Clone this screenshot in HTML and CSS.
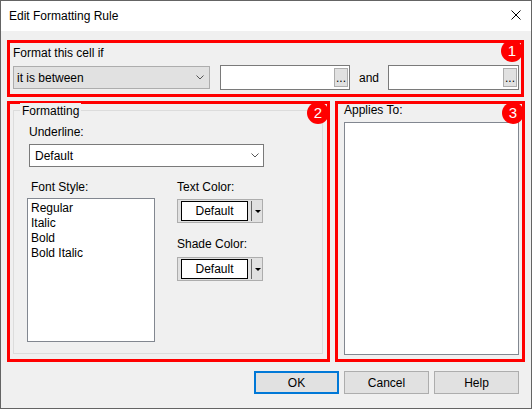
FILE: index.html
```html
<!DOCTYPE html>
<html lang="en">
<head>
    <meta charset="UTF-8">
    <meta name="viewport" content="width=device-width, initial-scale=1.0">
    <title>Edit Formatting Rule</title>
    <link rel="stylesheet" href="styles.css">
</head>
<body>

<div class="dialog">
    <div class="titlebar">
        <span class="title">Edit Formatting Rule</span>
        <svg class="close" width="10" height="10" viewBox="0 0 10 10">
            <path d="M0.5 0.5 L9.5 9.5 M9.5 0.5 L0.5 9.5" stroke="#000" stroke-width="1" fill="none"/>
        </svg>
    </div>

    <div class="content">
        <!-- condition -->
        <div class="frame frame-condition">
            <span class="badge">1</span>
            <div class="label">Format this cell if</div>
            <div class="condition-row">
                <div class="combo combo-flat">
                    <span>it is between</span>
                    <svg class="chevron" width="8" height="5" viewBox="0 0 8 5">
                        <polyline points="0.5,0.5 4,4 7.5,0.5" stroke="#555" stroke-width="1" fill="none"/>
                    </svg>
                </div>
                <div class="textbox"><button class="ellipsis">...</button></div>
                <span class="and">and</span>
                <div class="textbox textbox-wide"><button class="ellipsis">...</button></div>
            </div>
        </div>

        <div class="frames-row">
            <!-- formatting -->
            <div class="frame frame-format">
                <span class="badge">2</span>
                <div class="group">
                    <span class="legend">Formatting</span>
                    <div class="label">Underline:</div>
                    <div class="combo combo-white">
                        <span>Default</span>
                        <svg class="chevron" width="8" height="5" viewBox="0 0 8 5">
                            <polyline points="0.5,0.5 4,4 7.5,0.5" stroke="#555" stroke-width="1" fill="none"/>
                        </svg>
                    </div>

                    <div class="style-cols">
                        <div class="col-font">
                            <div class="label">Font Style:</div>
                            <ul class="listbox font-list">
                                <li>Regular</li>
                                <li>Italic</li>
                                <li>Bold</li>
                                <li>Bold Italic</li>
                            </ul>
                        </div>
                        <div class="col-color">
                            <div class="label">Text Color:</div>
                            <div class="color-btn">
                                <span class="swatch">Default</span>
                                <span class="split"></span>
                                <span class="arrow"></span>
                            </div>
                            <div class="label shade-label">Shade Color:</div>
                            <div class="color-btn">
                                <span class="swatch">Default</span>
                                <span class="split"></span>
                                <span class="arrow"></span>
                            </div>
                        </div>
                    </div>
                </div>
            </div>

            <!-- range -->
            <div class="frame frame-applies">
                <span class="badge">3</span>
                <div class="label applies-label">Applies To:</div>
                <div class="listbox applies-list"></div>
            </div>
        </div>

        <div class="footer">
            <button class="btn btn-default">OK</button>
            <button class="btn">Cancel</button>
            <button class="btn">Help</button>
        </div>
    </div>
</div>

</body>
</html>
```

FILE: styles.css
```css
* {
    box-sizing: border-box;
}
body {
    margin: 0;
    font-family: "Liberation Sans", Arial, sans-serif;
    font-size: 12px;
    color: #000;
}
.dialog {
    width: 532px;
    height: 409px;
    border: 1px solid #646464;
    display: flex;
    flex-direction: column;
}
.titlebar {
    height: 30px;
    background: #fff;
    display: flex;
    align-items: center;
    justify-content: space-between;
    padding: 0 10px 0 8px;
    line-height: 16px;
}
.close {
    margin-top: -2px;
}
.content {
    flex: 1;
    background: #f0f0f0;
    padding: 9px 6px 0 6px;
}
.label {
    line-height: 16px;
}

/* red outlines around the three areas */
.frame {
    border: 3px solid #ff0000;
    position: relative;
}
.badge {
    position: absolute;
    top: -2px;
    right: -2px;
    width: 22px;
    height: 22px;
    border-radius: 50%;
    background: #ff0000;
    color: #fff;
    font-size: 15px;
    line-height: 22px;
    text-align: center;
    z-index: 2;
}
.frame-condition {
    width: 517px;
    height: 57px;
    padding: 2px 0 0 3px;
}
.frame-condition .badge {
    top: -3px;
}
.condition-row {
    display: flex;
    align-items: center;
    height: 25px;
    margin-top: 4px;
}
.combo {
    height: 23px;
    display: flex;
    align-items: center;
    justify-content: space-between;
}
.combo-flat {
    width: 197px;
    background: #e1e1e1;
    border: 1px solid #adadad;
    padding: 0 5px 0 3px;
}
.textbox {
    width: 130px;
    height: 25px;
    margin-left: 10px;
    background: #fff;
    border: 1px solid #7a7a7a;
    display: flex;
    align-items: center;
    justify-content: flex-end;
    padding-right: 1px;
}
.textbox-wide {
    width: 131px;
    margin-left: 0;
}
.ellipsis {
    width: 14px;
    height: 19px;
    padding: 0;
    background: #e1e1e1;
    border: 1px solid #adadad;
    font: inherit;
    line-height: 19px;
    color: #000;
}
.and {
    margin: 0 9px 0 9px;
}

.frames-row {
    display: flex;
    gap: 5px;
    margin-top: 4px;
}
.frame-format {
    width: 323px;
    height: 261px;
    padding: 6px 0 0 3px;
}
.group {
    position: relative;
    width: 310px;
    height: 244px;
    border: 1px solid #dcdcdc;
    padding: 13px 0 0 15px;
}
.legend {
    position: absolute;
    top: -8px;
    left: 6px;
    padding: 0 2px;
    background: #f0f0f0;
    line-height: 16px;
}
.combo-white {
    width: 235px;
    margin-top: 4px;
    background: #fff;
    border: 1px solid #7a7a7a;
    padding: 0 4px 0 5px;
}
.style-cols {
    display: flex;
    margin-top: 12px;
    margin-left: -2px;
}
.col-font {
    width: 128px;
}
.col-font .label {
    padding-left: 4px;
}
.listbox {
    background: #fff;
    border: 1px solid #828790;
}
.font-list {
    list-style: none;
    margin: 3px 0 0 0;
    height: 144px;
    padding: 2px 0 0 3px;
    line-height: 15px;
}
.col-color {
    margin-left: 22px;
}
.color-btn {
    width: 86px;
    height: 24px;
    margin-top: 4px;
    background: #e1e1e1;
    border: 1px solid #adadad;
    display: flex;
    align-items: center;
    padding-left: 3px;
}
.swatch {
    width: 67px;
    height: 20px;
    border: 1px solid #000;
    background: #fff;
    text-align: center;
    line-height: 18px;
}
.split {
    width: 1px;
    height: 20px;
    margin-left: 3px;
    background: #696969;
}
.arrow {
    width: 0;
    height: 0;
    margin-left: 3px;
    border-left: 3px solid transparent;
    border-right: 3px solid transparent;
    border-top: 3px solid #000;
}
.shade-label {
    margin-top: 13px;
}
.shade-label + .color-btn {
    margin-top: 5px;
}

.frame-applies {
    width: 190px;
    height: 261px;
    padding-left: 6px;
}
.applies-label {
    line-height: 12px;
}
.applies-list {
    width: 175px;
    height: 233px;
    margin-top: 6px;
}

.footer {
    display: flex;
    justify-content: flex-end;
    gap: 5px;
    margin-top: 9px;
    padding-right: 6px;
}
.btn {
    width: 85px;
    height: 23px;
    padding: 0;
    background: #e1e1e1;
    border: 1px solid #adadad;
    font: inherit;
    color: #000;
}
.btn-default {
    border: 2px solid #0078d7;
}
```
